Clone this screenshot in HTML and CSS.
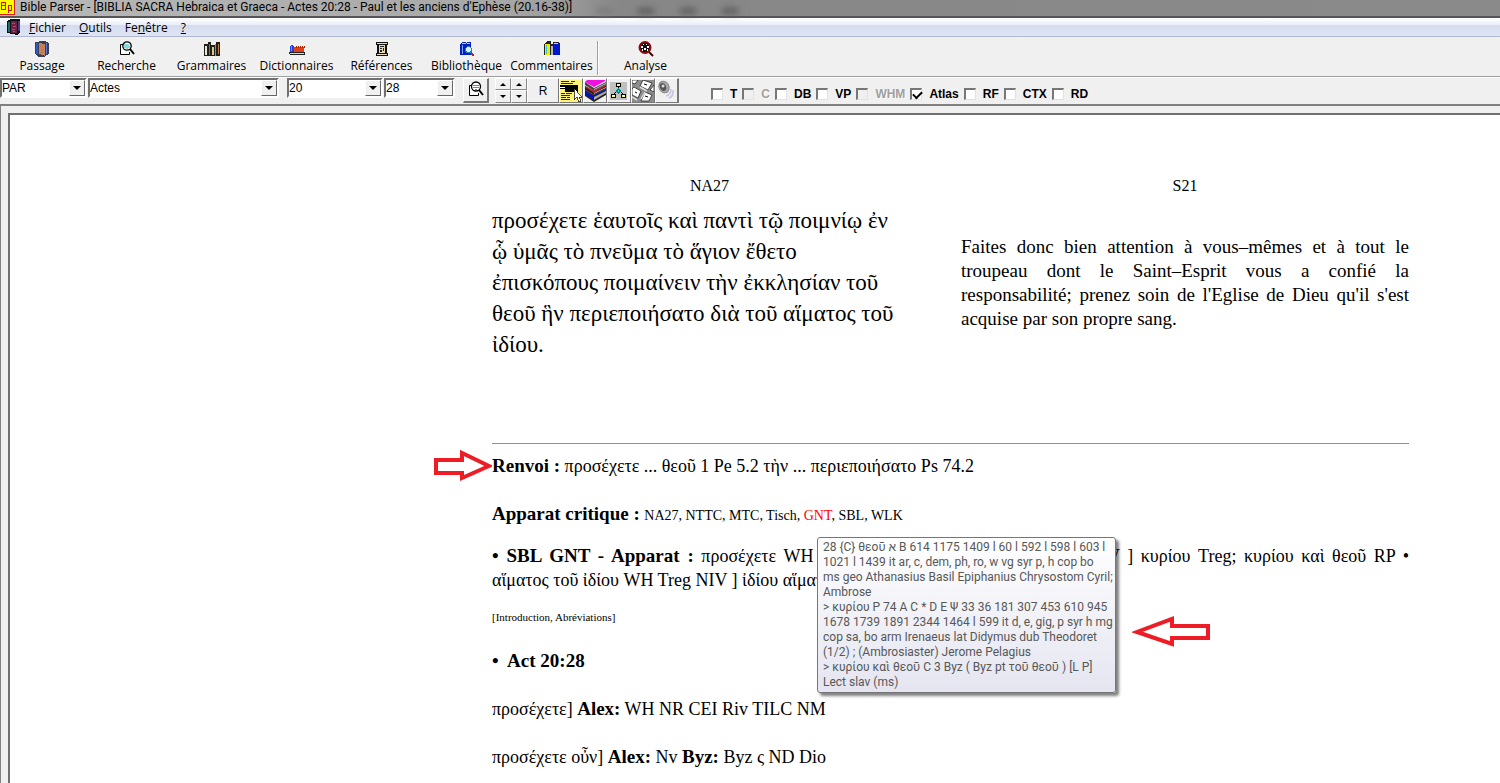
FILE: index.html
```html
<!DOCTYPE html>
<html lang="fr">
<head>
  <meta charset="UTF-8" />
  <meta name="viewport" content="width=device-width, initial-scale=1" />
  <title>Bible Parser</title>
  <link rel="stylesheet" href="styles.css">
</head>
<body>

  <header class="titlebar">
    <svg class="app-logo" width="16" height="16" viewBox="0 0 16 16" shape-rendering="crispEdges">
      <rect width="15" height="15" fill="#ffff00"/>
      <path d="M0 14.500H14.500V0" fill="none" stroke="#d02020" />
      <path d="M1.500 2.500h4v7h-4zM1.500 5.500h4M8.500 13V5.500h3v5H9" fill="none" stroke="#e01010"/>
    </svg>
    <span class="title">Bible Parser - [BIBLIA SACRA Hebraica et Graeca - Actes 20:28 - Paul et les anciens d'Ephèse (20.16-38)]</span>
    <span class="ghost"><i></i><i></i><i></i><i></i></span>
  </header>

  <nav class="menubar">
    <svg width="14" height="16" viewBox="0 0 14 16" shape-rendering="crispEdges">
      <path d="M0 2l4-2h9v13l-3 3-10-2z" fill="#111"/>
      <path d="M1 3h2v10H1z" fill="#1c6c78"/>
      <path d="M4 2h6v12H4z" fill="#6d2146"/>
      <path d="M5 4h3M6 7h3M5 10h3M6 12h2" stroke="#d63a5c"/>
      <path d="M11 2h2v10h-2z" fill="#3d4080"/>
    </svg>
    <button><u>F</u>ichier</button>
    <button><u>O</u>utils</button>
    <button>Fe<u>n</u>être</button>
    <button><u>?</u></button>
  </nav>

  <div class="toolbar">
    <button>
      <svg width="16" height="16" viewBox="0 0 16 16" shape-rendering="crispEdges">
        <path d="M1 1h3l1-1h6l1 1h2l1 2v9l-2 2-3 2H5l-3-2-1-2z" fill="#3a3f58"/>
        <path d="M2 2h2v11H2z" fill="#3458c8"/>
        <path d="M5 2l6 1v12l-6-2z" fill="#c5835a"/>
        <path d="M12 2h1v11h-1z" fill="#5878d8"/>
        <path d="M6 5h3M7 8h3M6 11h3" stroke="#b8764c"/>
      </svg>
      Passage
    </button>
    <button>
      <svg width="16" height="16" viewBox="0 0 16 16">
        <path d="M4 3.500H1.500V13.500H10.500V11" fill="#fff" stroke="#000"/>
        <circle cx="8" cy="5" r="4.200" fill="#fff" stroke="#000" stroke-width="1.300"/>
        <path d="M5 4h5M5 6h6M7 8h2" stroke="#18b0b0"/>
        <path d="M11 8l4 5" stroke="#000" stroke-width="2"/>
      </svg>
      Recherche
    </button>
    <button>
      <svg width="16" height="16" viewBox="0 0 16 16" shape-rendering="crispEdges">
        <path d="M0 3h4v12H0zM4 1h3v14H4zM7 4h4v11H7zM12 1h4v14h-4z" fill="#202018"/>
        <path d="M1 5h2v9H1z" fill="#e8e8e0"/>
        <path d="M5 3h1v11H5z" fill="#4a8a50"/>
        <path d="M8 6h2v8H8z" fill="#d8c898"/>
        <path d="M11 3h1v12h-1zM14 3h1v10h-1z" fill="#c08048"/>
      </svg>
      Grammaires
    </button>
    <button>
      <svg width="16" height="16" viewBox="0 0 16 16" shape-rendering="crispEdges">
        <path d="M0 11h16v2l-1 1H1l-1-1z" fill="#222"/>
        <path d="M1 6l1-2h2l1 2v5H1z" fill="#2040e0"/>
        <path d="M2 5h1v5H2z" fill="#30c0d0"/>
        <path d="M5 6h10v5H5z" fill="#e04018"/>
        <path d="M7 5v2M9 5v2M11 5v2M13 5v2M15 5v2" stroke="#a02810"/>
        <path d="M1 12.500h14" stroke="#d8d8d8"/>
      </svg>
      Dictionnaires
    </button>
    <button>
      <svg width="16" height="16" viewBox="0 0 16 16" shape-rendering="crispEdges">
        <path d="M2 1h12v3h-1v8h1v3H2v-3h1V4H2z" fill="#111"/>
        <path d="M3 2h10v1H3zM3 13h10v1H3zM5 4h6v8H5z" fill="#e8dcb8"/>
        <path d="M6 5h4v1H6zM6 7h2v1H6zM9 7h1v3H9zM6 9h2v2H6z" fill="#222"/>
      </svg>
      Références
    </button>
    <button>
      <svg width="16" height="16" viewBox="0 0 16 16" shape-rendering="crispEdges">
        <path d="M1 3l2-2h4v2l1-2h4v13H1z" fill="#0020c0"/>
        <path d="M3 2h4M8 2h3" stroke="#e8e020"/>
        <path d="M3 4v9" stroke="#80a0ff"/>
        <circle cx="9.500" cy="8.500" r="3" fill="#c8f8ff" stroke="#2878c8"/>
        <path d="M12 12l3 3" stroke="#d01818" stroke-width="2"/>
      </svg>
      Bibliothèque
    </button>
    <button>
      <svg width="16" height="16" viewBox="0 0 16 16" shape-rendering="crispEdges">
        <path d="M0 3l3-3h4v3h2V1h4l3 1v12H0z" fill="#222"/>
        <path d="M1 3h5v11H1z" fill="#f4e800"/>
        <path d="M2 4h1v9H2z" fill="#30c8c8"/>
        <path d="M7 5h2v9H7z" fill="#b8b8b8"/>
        <path d="M10 3h5v11h-5z" fill="#0018c8"/>
        <path d="M10 2h4" stroke="#f4e800"/>
      </svg>
      Commentaires
    </button>
    <span class="separator"></span>
    <button>
      <svg width="16" height="16" viewBox="0 0 16 16">
        <circle cx="7" cy="6.500" r="5.500" fill="#111" stroke="#8c0c0c" stroke-width="2"/>
        <path d="M3 5h2v2H3zM9 5h2v2H9zM6 7h2v2H6zM5 3h1v1H5zM8 3h1v1H8zM4 8h1v2H4zM9 8h1v2H9z" fill="#fff"/>
        <path d="M11 11l4 4" stroke="#400" stroke-width="2"/>
      </svg>
      Analyse
    </button>
  </div>

  <div class="refbar">
    <span class="combo combo-version"><select aria-label="Version"><option>PAR</option></select><span class="drop"></span></span>
    <span class="combo combo-book"><select aria-label="Livre"><option>Actes</option></select><span class="drop"></span></span>
    <span class="combo combo-chapter"><select aria-label="Chapitre"><option>20</option></select><span class="drop"></span></span>
    <span class="combo combo-verse"><select aria-label="Verset"><option>28</option></select><span class="drop"></span></span>

    <div class="tools">
      <button class="tool tool-find" aria-label="Chercher">
        <svg width="18" height="18" viewBox="0 0 18 18">
          <path d="M5 4.500H2.500V14.500H11.500V12" fill="#fff" stroke="#000"/>
          <circle cx="9" cy="5.500" r="4.500" fill="#fff" stroke="#000" stroke-width="1.300"/>
          <path d="M6 4.500h6M6 6.500h6M8 8.500h2" stroke="#18b0b0"/>
          <path d="M12 9l4 5" stroke="#000" stroke-width="2"/>
        </svg>
      </button>
      <div class="spinners">
        <button aria-label="Chapitre suivant"><i class="up"></i></button>
        <button aria-label="Verset suivant"><i class="up"></i></button>
        <button aria-label="Chapitre précédent"><i class="down"></i></button>
        <button aria-label="Verset précédent"><i class="down"></i></button>
      </div>
      <button class="tool tool-r">R</button>
      <button class="tool" aria-label="Infobulles">
        <svg width="22" height="22" viewBox="0 0 22 22" shape-rendering="crispEdges">
          <rect width="22" height="22" fill="#fff27a"/>
          <path d="M1 1.500h8M11 1.500h4M1 3.500h12M1 13.500h4M6 13.500h6M1 15.500h9M1 17.500h5M7 17.500h3M1 19.500h9" stroke="#0018d8"/>
          <path d="M0 5h18v7H5V9H0z" fill="#000"/>
          <path d="M0 7.500h5" stroke="#fff"/>
          <path d="M14 8v12l3-3 2 5 2-1-2-4h3z" fill="#fff" stroke="#000" stroke-width=".7"/>
        </svg>
      </button>
      <button class="tool" aria-label="Livres">
        <svg width="22" height="22" viewBox="0 0 22 22">
          <path d="M1 10l9 5 12-6v6L10 22 1 16z" fill="#222"/>
          <path d="M1 11l9 6v3l-9-6z" fill="#0010d8"/>
          <path d="M10 17l12-6v2l-12 7z" fill="#aaa"/>
          <path d="M10 15l12-6v1l-12 6z" fill="#0010d8"/>
          <path d="M1 6l9 5 12-6v4l-12 6-9-5z" fill="#222"/>
          <path d="M1 6l9 5 12-6v1l-12 7-9-6z" fill="#e01020"/>
          <path d="M10 13l12-6v1l-12 6z" fill="#aaa"/>
          <path d="M1 2l9 6 12-6v3l-12 6-9-6z" fill="#444"/>
          <path d="M10 9l12-6v1l-12 6z" fill="#bbb"/>
          <path d="M1 2L3 0h18v1L10 7z" fill="#f010e0"/>
        </svg>
      </button>
      <button class="tool" aria-label="Arborescence">
        <svg width="22" height="22" viewBox="0 0 22 22" shape-rendering="crispEdges">
          <rect x="2" y="2" width="17" height="18" fill="#c0c0c0"/>
          <path d="M10.500 7v3M8 12l-3 3M13 12l3 3" stroke="#000"/>
          <path d="M10.500 9l2 2-2 2-2-2z" fill="#20e0e0" stroke="#088"/>
          <path d="M8.500 3.500h4v3h-4zM3.500 14.500h4v3h-4zM13.500 14.500h4v3h-4z" fill="#ffff70" stroke="#000"/>
        </svg>
      </button>
      <button class="tool" aria-label="Clavier">
        <svg width="22" height="22" viewBox="0 0 22 22">
          <rect width="22" height="22" fill="#8c8c8c"/>
          <path d="M11 0l9 3-4 7-8-4zM2 7l7 4-3 7-6-3V9zM13 12l7 3-3 6H9zM0 0h6L3 4 0 3zM22 5v7l-4-2z" fill="#fff" stroke="#222" stroke-width=".8"/>
          <path d="M8 7l7 4M0 17l5 3M9 19l4-7" stroke="#ddd" stroke-width="1.500"/>
          <path d="M12 4l3 1M13 16l3 1M3 12l2 1" stroke="#000"/>
        </svg>
      </button>
      <button class="tool" aria-label="Son">
        <svg width="22" height="22" viewBox="0 0 22 22">
          <ellipse cx="8" cy="7" rx="5" ry="6" transform="rotate(-25 8 7)" fill="#a8a8ac" stroke="#888"/>
          <ellipse cx="7" cy="7" rx="3" ry="4" transform="rotate(-25 7 7)" fill="#555"/>
          <circle cx="7" cy="6" r="1.500" fill="#ddd"/>
          <path d="M10 16q5-1 5-7M13 18q5-2 4-8" fill="none" stroke="#c4c4e0" stroke-width="1.500"/>
        </svg>
      </button>
    </div>

    <div class="checks">
      <label><input type="checkbox">T</label>
      <label><input type="checkbox" disabled>C</label>
      <label><input type="checkbox">DB</label>
      <label><input type="checkbox">VP</label>
      <label><input type="checkbox" disabled>WHM</label>
      <label><input type="checkbox" checked>Atlas</label>
      <label><input type="checkbox">RF</label>
      <label><input type="checkbox">CTX</label>
      <label><input type="checkbox">RD</label>
    </div>
  </div>

  <div class="workspace">
    <main class="page">
      <div class="parallel">
        <section>
          <h2>NA27</h2>
          <p class="greek" lang="grc">προσέχετε ἑαυτοῖς καὶ παντὶ τῷ ποιμνίῳ ἐν<br>ᾧ ὑμᾶς τὸ πνεῦμα τὸ ἅγιον ἔθετο<br>ἐπισκόπους ποιμαίνειν τὴν ἐκκλησίαν τοῦ<br>θεοῦ ἣν περιεποιήσατο διὰ τοῦ αἵματος τοῦ<br>ἰδίου.</p>
        </section>
        <section>
          <h2>S21</h2>
          <p class="french">Faites donc bien attention à vous–mêmes et à tout le troupeau dont le Saint–Esprit vous a confié la responsabilité; prenez soin de l'Eglise de Dieu qu'il s'est acquise par son propre sang.</p>
        </section>
      </div>

      <hr>

      <div class="notes">
        <p class="renvoi">
          <svg class="arrow-right" width="58" height="32" viewBox="0 0 58 32">
            <path d="M2 10H28V3L55 16L28 28V23H2Z" fill="#fff" stroke="#ee1c24" stroke-width="4"/>
          </svg>
          <b>Renvoi :</b> προσέχετε ... θεοῦ 1 Pe 5.2 τὴν ... περιεποιήσατο Ps 74.2
        </p>
        <p class="sources"><b>Apparat critique :</b> <span>NA27, NTTC, MTC, Tisch, <em>GNT</em>, SBL, WLK</span></p>

        <div class="apparatus">
          <p class="justified"><b>• SBL GNT - Apparat :</b> προσέχετε WH Treg NIV ] + οὖν RP • θεοῦ WH NIV ] κυρίου Treg; κυρίου καὶ θεοῦ RP •</p>
          <p>αἵματος τοῦ ἰδίου WH Treg NIV ] ἰδίου αἵματος RP</p>

          <div class="tooltip" role="tooltip">28 {C} θεοῦ א B 614 1175 1409 l 60 l 592 l 598 l 603 l<br>1021 l 1439 it ar, c, dem, ph, ro, w vg syr p, h cop bo<br>ms geo Athanasius Basil Epiphanius Chrysostom Cyril;<br>Ambrose<br>&gt; κυρίου P 74 A C * D E Ψ 33 36 181 307 453 610 945<br>1678 1739 1891 2344 1464 l 599 it d, e, gig, p syr h mg<br>cop sa, bo arm Irenaeus lat Didymus dub Theodoret<br>(1/2) ; (Ambrosiaster) Jerome Pelagius<br>&gt; κυρίου καὶ θεοῦ C 3 Byz ( Byz pt τοῦ θεοῦ ) [L P]<br>Lect slav (ms)</div>
          <svg class="arrow-left" width="80" height="34" viewBox="0 0 80 34">
            <path d="M76 11H40V4L5 17L40 29V23H76Z" fill="#fff" stroke="#ee1c24" stroke-width="4"/>
          </svg>
        </div>

        <p class="links">[Introduction, Abréviations]</p>
        <p><b>•&nbsp; Act 20:28</b></p>
        <p>προσέχετε] <b>Alex:</b> WH NR CEI Riv TILC NM</p>
        <p>προσέχετε οὖν] <b>Alex:</b> Nv <b>Byz:</b> Byz ς ND Dio</p>
      </div>
    </main>
  </div>

</body>
</html>
```
FILE: styles.css
```css
* {
  box-sizing: border-box;
}
body {
  margin: 0;
  height: 100vh;
  display: flex;
  flex-direction: column;
  overflow: hidden;
  background: #f0f0f0;
  color: #000;
  font-family: "Open Sans", "Noto Sans", sans-serif;
  font-size: 12px;
}
button {
  margin: 0;
  padding: 0;
  border: 0;
  background: none;
  color: inherit;
  font: inherit;
}
svg {
  display: block;
  flex: none;
}
h2, p {
  margin: 0;
}

/* title and menu */
.titlebar {
  flex: none;
  display: flex;
  align-items: center;
  gap: 4px;
  height: 18px;
  background: linear-gradient(90deg, #b8b8b8, #a8a8a8 500px, #9c9c9c 560px, #878787 620px, #8a8a8a);
  border-bottom: 2px solid #555;
  line-height: 14px;
  white-space: nowrap;
}
.title {
  padding-bottom: 2px;
  font-family: Roboto, sans-serif;
}
.ghost {
  display: flex;
  gap: 26px;
  margin-left: 20px;
  padding-top: 6px;
  filter: blur(3px);
}
.ghost i {
  width: 16px;
  height: 6px;
  background: #5c5c5c;
}
.ghost i:first-child {
  background: #7a7a7a;
}
.menubar {
  flex: none;
  display: flex;
  align-items: center;
  gap: 13px;
  height: 19px;
  padding-left: 7px;
  background: linear-gradient(#fff, #e9edf7 38%, #d4dcef 42%, #dfe5f4);
  border-bottom: 1px solid #b0b8cc;
}
.menubar svg {
  margin-right: -5px;
}

/* main toolbar */
.toolbar {
  flex: none;
  display: flex;
  height: 40px;
  padding-top: 4px;
  border-bottom: 1px solid #a0a0a0;
}
.toolbar button {
  display: flex;
  flex-direction: column;
  align-items: center;
  width: 85px;
  line-height: 17px;
}
.toolbar button:first-child {
  width: 84px;
}
.separator {
  width: 2px;
  height: 34px;
  margin: 0 4px 0 3px;
  background: #a0a0a0;
  border-right: 1px solid #fff;
}

/* passage selection */
.refbar {
  flex: none;
  display: flex;
  align-items: flex-start;
  height: 29px;
  border-top: 1px solid #fff;
  border-bottom: 2px solid #808080;
  font-family: "Liberation Sans", Arial, sans-serif;
}
.combo {
  position: relative;
  height: 20px;
  margin-right: 1px;
  border: 2px solid;
  border-color: #707070 #fff #fff #707070;
  background: #fff;
}
.combo select {
  appearance: none;
  width: 100%;
  height: 16px;
  padding: 0;
  border: 0;
  background: #fff;
  color: #000;
  font: inherit;
}
.combo-version { width: 87px; }
.combo-book { width: 191px; margin-right: 8px; }
.combo-chapter { width: 96px; }
.combo-verse { width: 71px; }
.drop {
  position: absolute;
  top: 0;
  right: 0;
  width: 16px;
  height: 16px;
  display: flex;
  align-items: center;
  justify-content: center;
  background: #f0f0f0;
  border: 1px solid;
  border-color: #fff #666 #666 #fff;
  pointer-events: none;
}
.drop::before {
  content: "";
  border: 4px solid transparent;
  border-top-color: #000;
  border-bottom: 0;
}
.tools {
  display: flex;
  margin-left: 7px;
}
.tool {
  display: flex;
  align-items: center;
  justify-content: center;
  width: 24px;
  height: 25px;
  border: 1px solid;
  border-color: #fff #777 #777 #fff;
}
.tool-find {
  width: 26px;
  margin-right: 6px;
  border-width: 1px 2px 2px 1px;
}
.tool-r {
  width: 32px;
}
.tool:last-child {
  border-right-width: 2px;
}
.spinners {
  display: grid;
  grid-template-columns: 16px 16px;
  grid-template-rows: 12px 13px;
}
.spinners button {
  display: flex;
  align-items: center;
  justify-content: center;
  border: 1px solid;
  border-color: #fff #888 #888 #fff;
}
.up, .down {
  border: 3px solid transparent;
}
.up {
  border-top: 0;
  border-bottom-color: #000;
}
.down {
  border-bottom: 0;
  border-top-color: #000;
}
.checks {
  display: flex;
  gap: 5px;
  margin-left: 32px;
  padding-top: 8px;
  font-size: 12px;
  font-weight: bold;
}
.checks label {
  display: flex;
  align-items: center;
  gap: 7px;
  line-height: 16px;
}
.checks input {
  appearance: none;
  width: 12px;
  height: 12px;
  margin: 0;
  background: #fff;
  border: 1px solid;
  border-width: 2px 1px 1px 2px;
  border-color: #777 #e3e3e3 #e3e3e3 #777;
}
.checks input:disabled {
  background: #f0f0f0;
}
.checks label:has(:disabled) {
  color: #a0a0a0;
  text-shadow: 1px 1px #fff;
}
.checks input:checked::before {
  content: "";
  display: block;
  width: 7px;
  height: 4px;
  margin: 1px;
  border: solid #000;
  border-width: 0 0 2px 2px;
  transform: rotate(-45deg);
}

/* document */
.workspace {
  flex: 1;
  min-height: 0;
  padding: 7px 0 0 7px;
  border-left: 1px solid #808080;
}
.page {
  height: 100%;
  overflow: hidden;
  padding: 61px 91px 0 482px;
  background: #fff;
  border: solid #707070;
  border-width: 2px 0 0 2px;
  font-family: "Liberation Serif", "Times New Roman", serif;
  font-size: 18px;
  line-height: 24px;
}
.page b {
  font-size: 19px;
  line-height: 1;
}
.parallel {
  display: grid;
  grid-template-columns: 435fr 448fr;
  gap: 34px;
  height: 267px;
}
.parallel h2 {
  font-size: 16px;
  font-weight: normal;
  line-height: 20px;
  text-align: center;
}
.greek {
  padding-top: 9px;
  font-size: 23px;
  line-height: 31px;
  white-space: nowrap;
}
.french {
  padding-top: 39px;
  font-size: 19px;
  text-align: justify;
}
hr {
  height: 1px;
  margin: 0;
  border: 0;
  background: #909090;
}
.notes {
  display: flex;
  flex-direction: column;
  gap: 24px;
  padding-top: 10px;
}
.renvoi {
  position: relative;
}
.arrow-right {
  position: absolute;
  top: -4px;
  left: -58px;
}
.sources {
  margin-bottom: -6px;
}
.sources span {
  font-size: 14px;
  line-height: 1;
}
.sources em {
  color: #f00;
  font-style: normal;
}
.apparatus {
  position: relative;
}
.justified {
  text-align-last: justify;
}
.tooltip {
  position: absolute;
  top: -7px;
  left: 325px;
  width: 299px;
  padding: 2px 5px;
  border: 1px solid #767676;
  border-radius: 3px;
  background: linear-gradient(#fff, #e4e5f0);
  box-shadow: 3px 3px 3px rgba(0, 0, 0, .5);
  color: #575757;
  font-family: Roboto, "Noto Sans", sans-serif;
  font-size: 12px;
  line-height: 15px;
  white-space: nowrap;
}
.arrow-left {
  position: absolute;
  top: 71px;
  left: 640px;
}
.links {
  margin: -11px 0 -4px;
  font-size: 11px;
}
```
